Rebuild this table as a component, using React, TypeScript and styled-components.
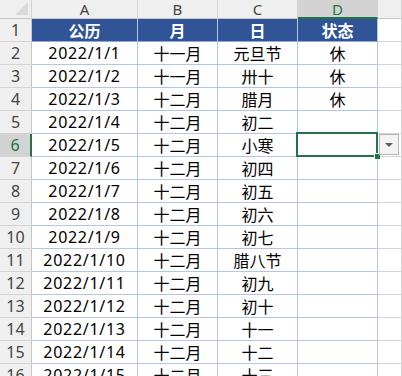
import styled, { createGlobalStyle } from 'styled-components';

const GlobalStyle = createGlobalStyle`
  html, body {
    margin: 0;
    padding: 0;
    background: #ffffff;
    overflow: hidden;
  }
  body {
    font-family: "Noto Sans", "Noto Sans CJK SC", sans-serif;
  }
`;

const columns = ['A', 'B', 'C', 'D'];
const selectedCol = 3;
const selectedRow = 6;

const rows: string[][] = [
  ['公历', '月', '日', '状态'],
  ['2022/1/1', '十一月', '元旦节', '休'],
  ['2022/1/2', '十一月', '卅十', '休'],
  ['2022/1/3', '十二月', '腊月', '休'],
  ['2022/1/4', '十二月', '初二', ''],
  ['2022/1/5', '十二月', '小寒', ''],
  ['2022/1/6', '十二月', '初四', ''],
  ['2022/1/7', '十二月', '初五', ''],
  ['2022/1/8', '十二月', '初六', ''],
  ['2022/1/9', '十二月', '初七', ''],
  ['2022/1/10', '十二月', '腊八节', ''],
  ['2022/1/11', '十二月', '初九', ''],
  ['2022/1/12', '十二月', '初十', ''],
  ['2022/1/13', '十二月', '十一', ''],
  ['2022/1/14', '十二月', '十二', ''],
  ['2022/1/15', '十二月', '十三', ''],
];

const Sheet = styled.div`
  display: grid;
  grid-template-columns: 32px 106px 80px 80px 80px 1fr;
  grid-auto-rows: 23px;
  grid-template-rows: 19px;
  width: 402px;
  height: 376px;
  overflow: hidden;
`;

const Corner = styled.div`
  position: relative;
  background: #efefef;
  border-right: 1px solid #d4d4d4;
  border-bottom: 1px solid #c6c6c6;
  box-sizing: border-box;

  &::after {
    content: '';
    position: absolute;
    right: 3px;
    bottom: 3px;
    width: 0;
    height: 0;
    border-left: 13px solid transparent;
    border-bottom: 13px solid #dadada;
  }
`;

const ColHeader = styled.div<{ $active?: boolean }>`
  display: flex;
  align-items: center;
  justify-content: center;
  box-sizing: border-box;
  background: ${p => (p.$active ? '#d3d3d3' : '#efefef')};
  color: ${p => (p.$active ? '#217346' : '#444444')};
  border-right: 1px solid #d4d4d4;
  border-bottom: ${p => (p.$active ? '2px solid #217346' : '1px solid #c6c6c6')};
  font-size: 15px;
  padding-top: ${p => (p.$active ? '1px' : '0')};
`;

const RowHeader = styled.div<{ $active?: boolean }>`
  display: flex;
  align-items: center;
  justify-content: center;
  box-sizing: border-box;
  background: ${p => (p.$active ? '#d3d3d3' : '#efefef')};
  color: ${p => (p.$active ? '#217346' : '#444444')};
  border-right: ${p => (p.$active ? '2px solid #217346' : '1px solid #c6c6c6')};
  border-bottom: 1px solid #d4d4d4;
  font-size: 16px;
`;

const Cell = styled.div<{ $head?: boolean; $blank?: boolean; $num?: boolean }>`
  position: relative;
  display: flex;
  align-items: center;
  justify-content: center;
  box-sizing: border-box;
  padding-bottom: 1px;
  font-size: 16px;
  letter-spacing: ${p => (p.$num ? '0.7px' : '0')};
  white-space: nowrap;
  background: ${p => (p.$head ? '#305496' : '#ffffff')};
  color: ${p => (p.$head ? '#ffffff' : '#000000')};
  font-weight: ${p => (p.$head ? 700 : 400)};
  border-right: 1px solid ${p => (p.$blank ? '#d4d4d4' : '#b4c6e7')};
  border-bottom: 1px solid ${p => (p.$blank ? '#d4d4d4' : p.$head ? '#8ea9db' : '#b4c6e7')};
`;

const Selection = styled.div`
  position: absolute;
  left: -2px;
  top: -2px;
  right: -1px;
  bottom: -1px;
  border: 2px solid #217346;
  pointer-events: none;
  z-index: 2;
`;

const FillHandle = styled.div`
  position: absolute;
  right: -4px;
  bottom: -4px;
  width: 5px;
  height: 5px;
  background: #217346;
  border-left: 1px solid #ffffff;
  border-top: 1px solid #ffffff;
`;

const DropButton = styled.div`
  position: absolute;
  left: 81px;
  top: 0px;
  width: 20px;
  height: 21px;
  box-sizing: border-box;
  border: 1px solid #b7b7b7;
  background: #f3f3f3;
  display: flex;
  align-items: center;
  justify-content: center;
  z-index: 3;

  &::after {
    content: '';
    width: 0;
    height: 0;
    border-left: 4px solid transparent;
    border-right: 4px solid transparent;
    border-top: 4px solid #5f5f5f;
  }
`;

export default function App() {
  return (
    <>
      <GlobalStyle />
      <Sheet>
        <Corner />
        {columns.map((c, i) => (
          <ColHeader key={c} $active={i === selectedCol}>
            {c}
          </ColHeader>
        ))}
        <ColHeader />
        {rows.map((r, ri) => {
          const rowNo = ri + 1;
          return [
            <RowHeader key={`h${rowNo}`} $active={rowNo === selectedRow}>
              {rowNo}
            </RowHeader>,
            ...r.map((v, ci) => (
              <Cell key={`c${rowNo}-${ci}`} $head={ri === 0} $num={ri > 0 && ci === 0}>
                {v}
                {rowNo === selectedRow && ci === selectedCol && (
                  <>
                    <Selection>
                      <FillHandle />
                    </Selection>
                    <DropButton />
                  </>
                )}
              </Cell>
            )),
            <Cell key={`e${rowNo}`} $blank />,
          ];
        })}
      </Sheet>
    </>
  );
}
